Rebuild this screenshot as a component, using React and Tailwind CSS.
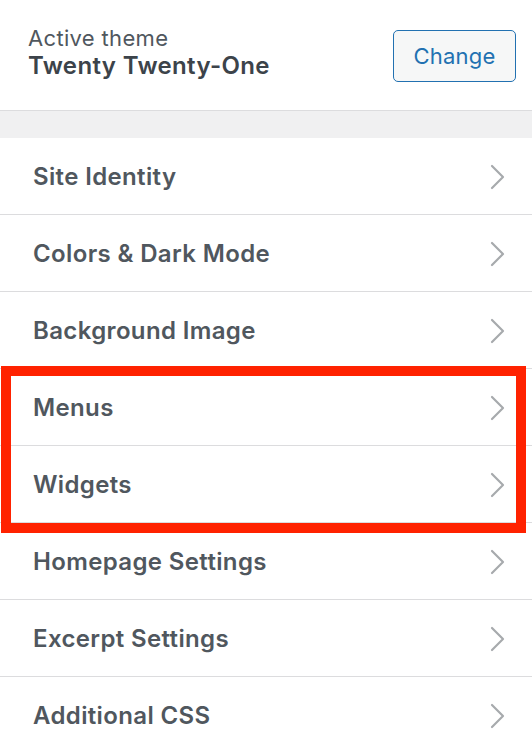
const sections = [
  'Site Identity',
  'Colors & Dark Mode',
  'Background Image',
  'Menus',
  'Widgets',
  'Homepage Settings',
  'Excerpt Settings',
  'Additional CSS',
]

const Chevron = () => (
  <svg width="16" height="26" viewBox="0 0 16 26" fill="none" className="shrink-0">
    <polyline points="2,2 13,13 2,24" stroke="#a7aaad" strokeWidth="2.2" strokeLinecap="round" strokeLinejoin="round" />
  </svg>
)

export default function App() {
  return (
    <div className="relative w-[532px] h-[750px] overflow-hidden bg-white font-['Inter','Liberation_Sans',sans-serif]">
      {/* Active theme header */}
      <div className="h-[111px] flex items-center justify-between pl-[28px] pr-[16px] border-b border-[#dcdcde]">
        <div className="flex flex-col -mt-[4px]">
          <span className="text-[22px] leading-[26px] tracking-[0.015em] text-[#50575e]">Active theme</span>
          <span className="text-[24px] leading-[30px] tracking-[0.015em] font-semibold text-[#3c434a]">Twenty Twenty-One</span>
        </div>
        <button className="w-[123px] h-[52px] rounded-[5px] border-[1.5px] border-[#2271b1] bg-[#f6f7f7] text-[22px] tracking-[0.01em] text-[#2271b1] mt-[2px]">
          Change
        </button>
      </div>

      <div className="h-[27px] bg-[#f0f0f1]" />

      <ul>
        {sections.map((title) => (
          <li
            key={title}
            className="h-[77px] flex items-center justify-between pl-[33px] pr-[26px] pt-[2px] border-b border-[#dcdcde]"
          >
            <span className="text-[24px] font-semibold tracking-[0.015em] text-[#50575e]">{title}</span>
            <Chevron />
          </li>
        ))}
      </ul>

      {/* red highlight box */}
      <div className="absolute left-[1px] top-[366px] w-[525px] h-[167px] border-[10px] border-[#ff2200]" />
    </div>
  )
}
